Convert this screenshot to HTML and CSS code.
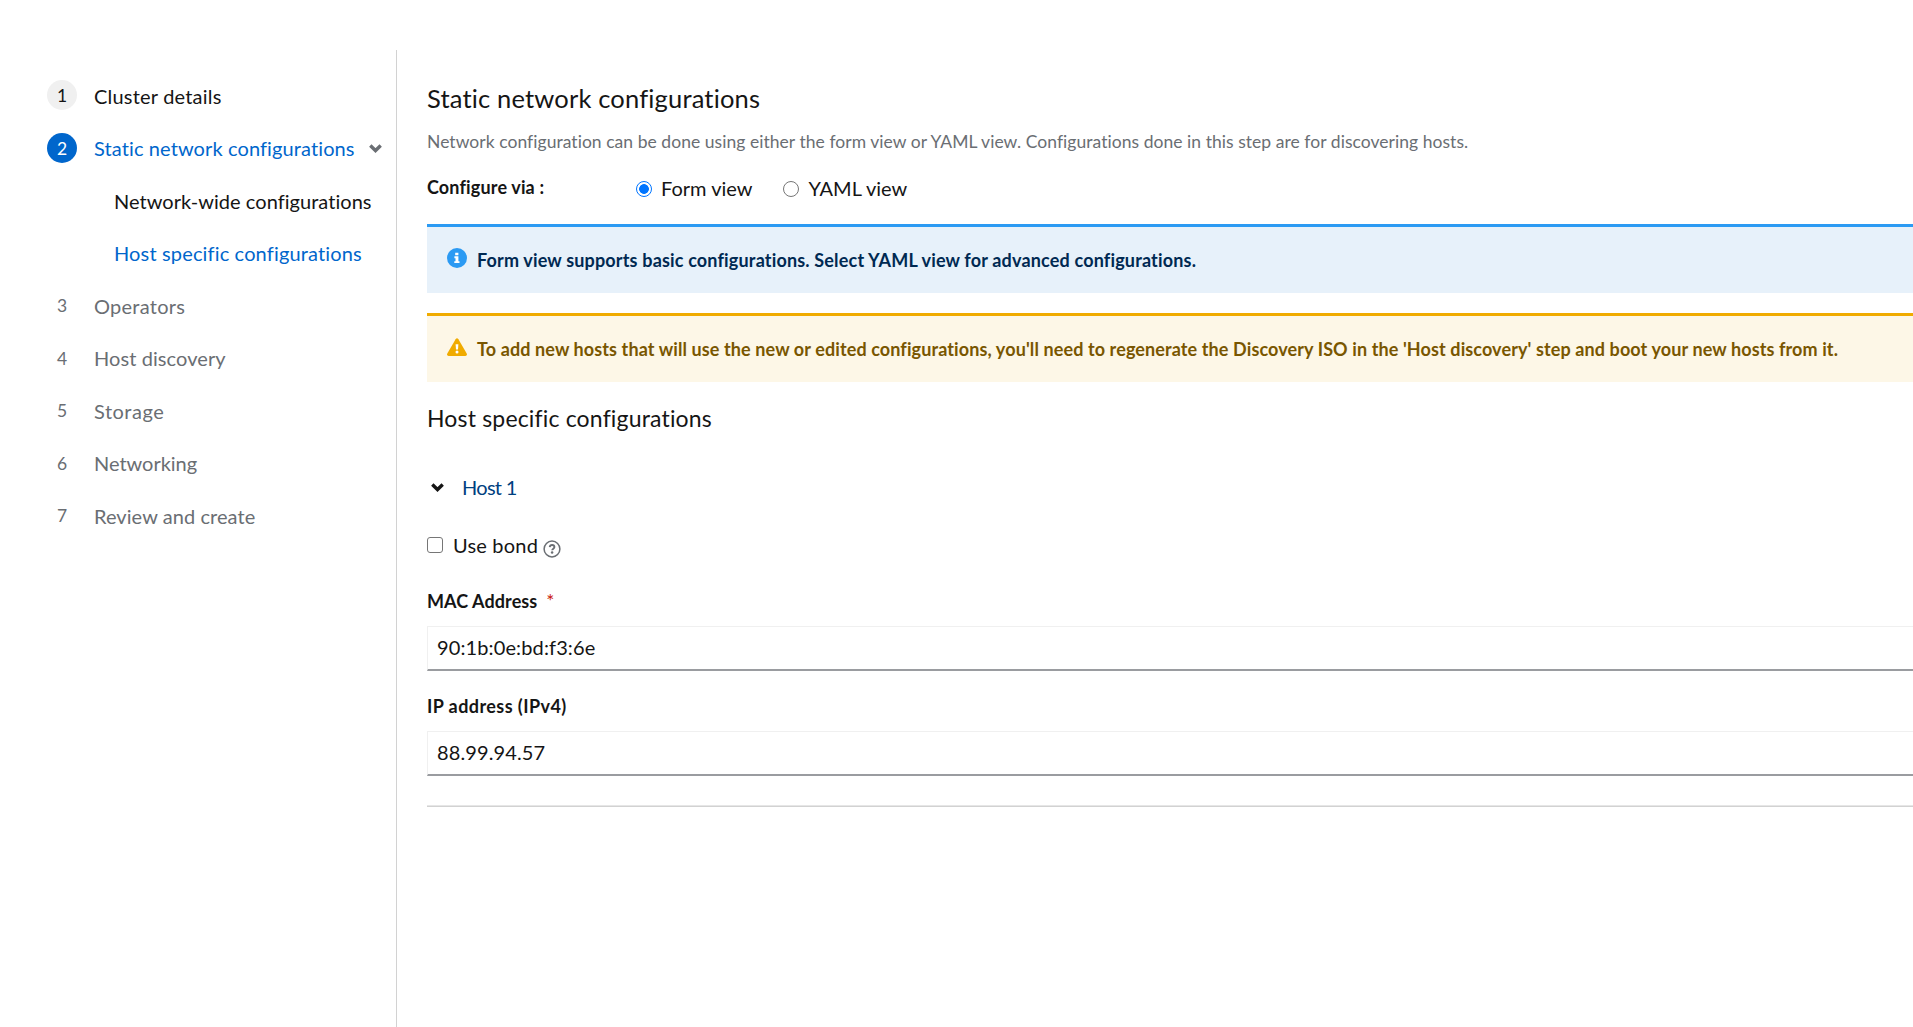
FILE: index.html
```html
<!DOCTYPE html>
<html lang="en">
<head>
<meta charset="utf-8">
<title>Static network configurations</title>
<link rel="stylesheet" href="styles.css">
</head>
<body>
<div class="wizard">
  <nav class="steps">
    <a class="step done"><span class="num">1</span><span class="t s1">Cluster details</span></a>
    <a class="step current"><span class="num">2</span><span class="t s2">Static network configurations</span>
      <svg class="chev" viewBox="0 0 13 9"><path d="M1.3 1.6 6.5 6.600 11.700 1.600" fill="none" stroke="currentColor" stroke-width="3.400"/></svg></a>
    <a class="step sub"><span class="t s3">Network-wide configurations</span></a>
    <a class="step sub active"><span class="t s4">Host specific configurations</span></a>
    <a class="step"><span class="num">3</span><span class="t s5">Operators</span></a>
    <a class="step"><span class="num">4</span><span class="t s6">Host discovery</span></a>
    <a class="step"><span class="num">5</span><span class="t s7">Storage</span></a>
    <a class="step"><span class="num">6</span><span class="t s8">Networking</span></a>
    <a class="step"><span class="num">7</span><span class="t s9">Review and create</span></a>
  </nav>
  <main class="content">
    <h1><span class="t title">Static network configurations</span></h1>
    <p class="desc"><span class="t desc-text">Network configuration can be done using either the form view or YAML view. Configurations done in this step are for discovering hosts.</span></p>
    <div class="via">
      <span class="via-label"><span class="t via-text label">Configure via :</span></span>
      <label class="radio"><i class="dot on"></i><span class="t form-view">Form view</span></label>
      <label class="radio"><i class="dot"></i><span class="t yaml-view">YAML view</span></label>
    </div>
    <div class="alert info">
      <svg class="alert-icon" viewBox="0 0 20 20"><circle cx="10" cy="10" r="10" fill="#2b9af3"/><path d="M8.200 4.800h3.200v2.500H8.200zM7.400 8.300h4v4.900h1.100v1.900H7.300v-1.900h1.200v-3H7.400z" fill="#fff"/></svg>
      <span class="t info-text">Form view supports basic configurations. Select YAML view for advanced configurations.</span>
    </div>
    <div class="alert warn">
      <svg class="alert-icon" viewBox="0 0 20 20"><path d="M8.600 2.200Q10 .2 11.400 2.200L19.700 16.600Q20.500 18.700 18.400 19H1.600Q-.5 18.700.3 16.600Z" fill="#f0ab00"/><path d="M8.600 7.300h2.800l-.4 5.200H9z" fill="#fff"/><circle cx="10" cy="15" r="1.500" fill="#fff"/></svg>
      <span class="t warn-text">To add new hosts that will use the new or edited configurations, you'll need to regenerate the Discovery ISO in the 'Host discovery' step and boot your new hosts from it.</span>
    </div>
    <h2><span class="t subtitle">Host specific configurations</span></h2>
    <div class="host"><svg class="chev" viewBox="0 0 13 9"><path d="M1.300 1.600 6.500 6.600 11.700 1.600" fill="none" stroke="currentColor" stroke-width="3.400"/></svg><span class="t host-name">Host 1</span></div>
    <div class="bond"><i class="box"></i><span class="t bond-text">Use bond</span>
      <svg class="help" viewBox="0 0 18 18"><circle cx="9" cy="9" r="7.900" fill="none" stroke="#6a6e73" stroke-width="1.500"/><path d="M6.700 7.200C6.900 5.700 7.900 5 9.100 5c1.300 0 2.300.8 2.300 2 0 1.700-2.200 1.600-2.200 3.300" fill="none" stroke="#6a6e73" stroke-width="1.900"/><circle cx="9.100" cy="12.600" r="1.250" fill="#6a6e73"/></svg></div>
    <div class="field-label"><span class="t mac-label label">MAC Address</span><span class="req">*</span></div>
    <div class="input"><span class="t mac">90:1b:0e:bd:f3:6e</span></div>
    <div class="field-label"><span class="t ip-label label">IP address (IPv4)</span></div>
    <div class="input"><span class="t ip">88.99.94.57</span></div>
    <hr>
  </main>
</div>
</body>
</html>
```
FILE: styles.css
```css
* { box-sizing: border-box; }
body { margin: 0; background: #fff; color: #151515; font-family: Lato, sans-serif; font-size: 20px; line-height: 30px; font-variant-ligatures: none; }
.wizard { display: flex; height: 1027px; padding-top: 50px; overflow: hidden; }
.t { white-space: nowrap; }

/* Step navigation */
.steps { width: 397px; flex: none; padding: 19.5px 0 0 47px; border-right: 1px solid #d2d2d2; }
.step { display: flex; align-items: center; height: 52.5px; color: #6a6e73; }
.num { width: 30px; height: 30px; margin-right: 17px; border-radius: 50%; text-align: center; font-size: 17.5px; line-height: 31px; flex: none; margin-top: -1px; }
.done, .sub { color: #151515; }
.done .num { background: #f0f0f0; }
.current, .active { color: #06c; }
.current .num { background: #06c; color: #fff; }
.sub { padding-left: 67px; }
.chev { width: 13px; height: 9px; flex: none; }
.current .chev { color: #6a6e73; margin-left: auto; margin-right: 14px; }
.s1 { letter-spacing: 0.2px; }
.s2 { letter-spacing: 0.11px; }
.s3 { letter-spacing: 0.04px; }
.s4 { letter-spacing: 0.15px; }
.s5 { letter-spacing: 0.25px; }
.s6 { letter-spacing: 0.08px; }
.s7 { letter-spacing: 0.5px; }
.s8 { letter-spacing: -0.03px; }
.s9 { letter-spacing: 0.07px; }

/* Main column */
.content { flex: 1; min-width: 0; padding: 33px 0 0 30px; }
h1, h2, p { margin: 0; font-weight: 400; }
h1 { font-size: 25.5px; line-height: 30px; height: 44px; letter-spacing: 0.17px; }
.desc { font-size: 17.5px; color: #6a6e73; height: 47px; line-height: 30px; letter-spacing: 0.045px; }
.via { display: flex; height: 50px; align-items: flex-start; }
.via-label { width: 209px; margin-top: -3px; }
.label { font-size: 18px; font-weight: 700; }
.via-text { letter-spacing: 0.15px; }
.radio { display: flex; align-items: center; margin-right: 31px; gap: 9px; }
.radio .t { margin-top: -1px; }
.dot { width: 16px; height: 16px; border: 1px solid #767676; border-radius: 50%; }
.dot.on { border: 1.500px solid #0075ff; background: radial-gradient(#0075ff 4.500px, #fff 5.200px); }
.alert { display: flex; height: 69px; padding: 18px 20px 0; gap: 10px; margin-bottom: 20px; font-size: 18px; font-weight: 700; border-top: 3px solid; }
.info { background: #e7f1fa; border-color: #2b9af3; color: #002952; letter-spacing: 0.17px; }
.warn { background: #fdf7e7; border-color: #f0ab00; color: #795600; letter-spacing: 0.108px; }
.alert-icon { width: 20px; height: 20px; flex: none; margin-top: 3px; }
h2 { font-size: 23px; line-height: 32px; height: 70px; letter-spacing: 0.17px; }

/* Host form */
.host { display: flex; align-items: center; gap: 18px; padding-left: 4px; height: 30px; color: #004080; }
.host .chev { color: #151515; }
.host-name { letter-spacing: -0.7px; }
.bond { display: flex; align-items: center; height: 30px; margin-top: 28px; }
.bond-text { letter-spacing: 0.2px; margin-top: -1px; }
.box { width: 16px; height: 16px; border: 1px solid #767676; border-radius: 3px; margin-right: 10px; }
.help { width: 18px; height: 18px; margin: 7px 0 0 5px; }
.field-label { height: 30px; margin-top: 25px; }
.mac-label { letter-spacing: 0.08px; }
.ip-label { letter-spacing: 0.42px; }
.req { color: #c9190b; font-size: 19px; margin-left: 9px; }
.input { height: 45px; margin-top: 11px; padding: 5px 9px; border: 1px solid #f0f0f0; border-right: 0; border-bottom: 2px solid #9a9ca0; }
.input + .field-label { margin-top: 19px; }
.mac, .ip { letter-spacing: 0.12px; }
hr { margin: 29px 0 0; border: 0; height: 2px; background: linear-gradient(#e6e6e6 50%, #d2d2d2 50%); }
```
